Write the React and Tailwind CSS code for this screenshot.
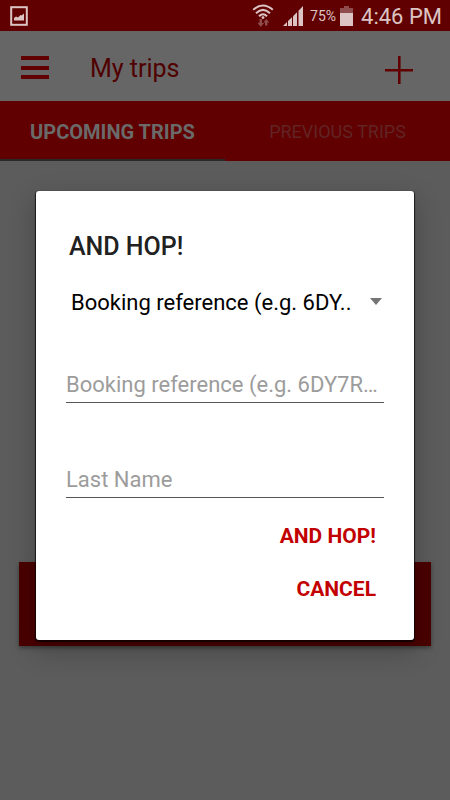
function StatusBar() {
  return (
    <div className="flex h-[31px] items-center bg-[#600000] pr-2 pl-[10px] text-[#dcc4c4]">
      <svg className="h-5 w-[18px]" viewBox="0 0 18 20" fill="none" aria-hidden="true">
        <rect x="1.2" y="1.2" width="15.6" height="17.6" stroke="#dcc4c4" strokeWidth="2" />
        <path d="M4 14.5V12L6 10.5L8 11.5L10.5 9L11.5 9.5L14 7.5V14.5Z" fill="#dcc4c4" />
      </svg>
      <div className="ml-auto flex items-center">
        <svg className="h-6 w-[22px]" viewBox="0 0 22 24" fill="none" aria-hidden="true">
          <g stroke="#dcc4c4" strokeWidth="2">
            <path d="M1.2 5.8Q11 -2.8 20.8 5.8" />
            <path d="M4 9.2Q11 2.6 18 9.2" />
            <path d="M7 12.2Q11 8.2 15 12.2" />
          </g>
          <circle cx="11" cy="13.6" r="1.4" fill="#dcc4c4" />
          <path d="M7.5 15H10V19H12L8.8 23L5.6 19H7.5Z" fill="#904c4c" />
          <path d="M13 21.5V18.5H11.3L14.3 15L17.3 18.5H15.4V21.5Z" fill="#904c4c" />
        </svg>
        <svg className="ml-[9px] h-5 w-5" viewBox="0 0 20 20" fill="#dcc4c4" aria-hidden="true">
          <path d="M0 20L4 16V20Z" />
          <path d="M5 15L9 11.2V20H5Z" />
          <path d="M10 10.2L14 6.2V20H10Z" />
          <path d="M15.5 4.8L20 0V20H15.5Z" />
        </svg>
        <span className="ml-[7px] text-sm">75%</span>
        <svg className="ml-1 h-5 w-[13px]" viewBox="0 0 13 20" aria-hidden="true">
          <path d="M4 0H9V2H13V7H0V2H4Z" fill="#904c4c" />
          <path d="M0 7H13V20H0Z" fill="#dcc4c4" />
        </svg>
        <span className="ml-2 pt-[2px] text-[22px] leading-[29px]">4:46 PM</span>
      </div>
    </div>
  );
}

function Header() {
  return (
    <header className="flex h-[70px] items-center bg-[#666666] px-[21px] pt-1 text-[#600000]">
      <button type="button" aria-label="Menu" className="flex h-10 w-7 items-center">
        <svg className="h-6 w-7" viewBox="0 0 28 24" fill="currentColor" aria-hidden="true">
          <path d="M0 0H28V4H0ZM0 10H28V14H0ZM0 19H28V23H0Z" />
        </svg>
      </button>
      <h1 className="ml-[41px] pt-[2px] text-[25px] leading-8 text-[#500000]">My trips</h1>
      <button type="button" aria-label="Add trip" className="mr-4 ml-auto flex h-10 w-7 items-center">
        <svg className="mt-1 h-7 w-7" viewBox="0 0 28 28" fill="currentColor" aria-hidden="true">
          <path d="M13 0H15.6V13H28V15.4H15.6V28H13V15.4H0V13H13Z" />
        </svg>
      </button>
    </header>
  );
}

function Tabs() {
  return (
    <nav className="flex h-[60px] bg-[#600000]">
      <button type="button" className="flex-1 border-b-2 border-[#262a2a] pt-1 text-xl font-bold text-[#6a6a6a]">
        UPCOMING TRIPS
      </button>
      <button type="button" className="flex-1 border-b-2 border-transparent pt-1 text-lg text-[#622424]">
        PREVIOUS TRIPS
      </button>
    </nav>
  );
}

function TripDialog() {
  const field =
    "h-10 w-full overflow-hidden border-b border-[#555555] pt-1 text-[22px] text-ellipsis text-black outline-none placeholder:text-[#9c9c9c] placeholder:opacity-100";
  return (
    <div className="absolute inset-x-0 top-[31px] bottom-0 flex items-center px-9">
      <form
        role="dialog"
        aria-labelledby="dialog-title"
        className="w-full rounded-[3px] bg-white px-[30px] pt-[42px] pb-6 shadow-[0_1px_1px_1px_#000000b0,0_10px_26px_2px_#00000038]"
      >
        <h2 id="dialog-title" className="ml-[3px] text-[25px] leading-7 font-medium text-[#212121]">
          AND HOP!
        </h2>
        <div className="mt-5 flex items-center">
          <select
            aria-label="Search by"
            className="h-10 min-w-0 flex-1 appearance-none bg-transparent pt-[2px] pl-[5px] text-[22px] text-black outline-none"
          >
            <option>Booking reference (e.g. 6DY..</option>
          </select>
          <svg className="mr-[2px] h-[7px] w-3" viewBox="0 0 12 7" aria-hidden="true">
            <path d="M0 0H12L6 7Z" fill="#757575" />
          </svg>
        </div>
        <input aria-label="Booking reference" placeholder="Booking reference (e.g. 6DY7R…" className={"mt-[42px] " + field} />
        <input aria-label="Last name" placeholder="Last Name" className={"mt-[55px] " + field} />
        <div className="mt-3 flex flex-col items-end pr-2 text-[21px] font-bold text-[#c20000]">
          <button type="submit" className="h-[53px]">
            AND HOP!
          </button>
          <button type="button" className="h-[53px]">
            CANCEL
          </button>
        </div>
      </form>
    </div>
  );
}

export default function App() {
  return (
    <div className="relative flex min-h-screen flex-col bg-[#5c5c5c] font-['Roboto',sans-serif]">
      <StatusBar />
      <Header />
      <Tabs />
      <main className="flex flex-1 flex-col justify-end px-[19px] pb-[154px]">
        <div className="h-[84px] bg-[#4a0000] shadow-[0_2px_4px_#00000060]" />
      </main>
      <TripDialog />
    </div>
  );
}
